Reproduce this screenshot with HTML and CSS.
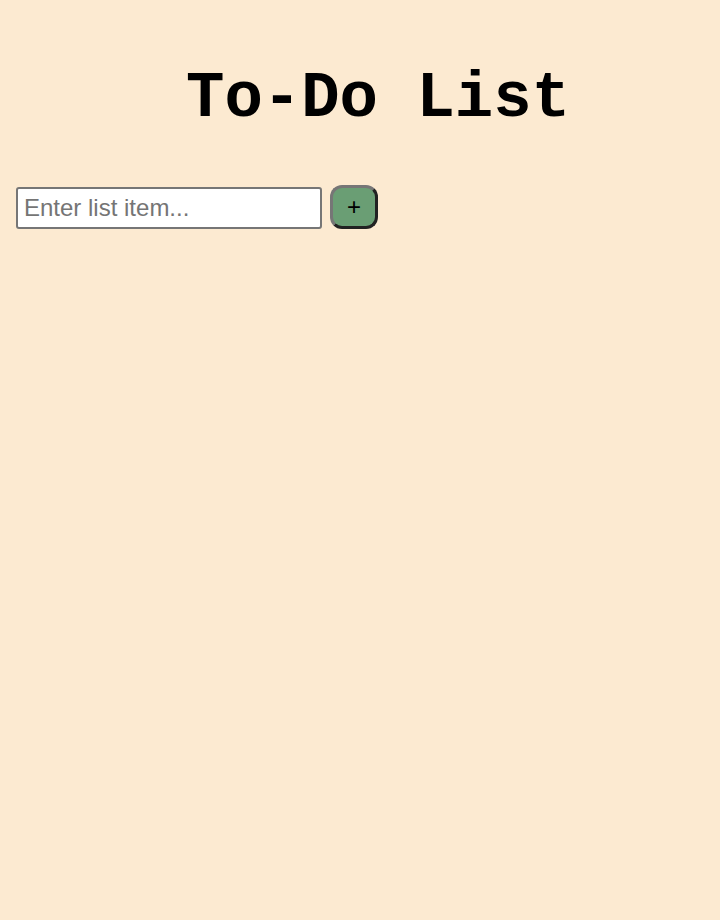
FILE: index.html
```html
<!DOCTYPE html>
<html>
<head>
<meta charset="utf-8">
<link rel="stylesheet" href="styles.css">
</head>
<body>
<h1 class="title">To-Do List</h1>
<div class="entry">
  <input class="item-input" type="text" placeholder="Enter list item...">
  <button class="add-btn">+</button>
</div>
</body>
</html>
```
FILE: styles.css
```css
html, body {
  margin: 0;
  padding: 0;
  background: #fcead1;
  height: 100%;
}
body {
  padding: 16px;
  box-sizing: border-box;
  font-family: "Liberation Sans", Arial, sans-serif;
}
.title {
  font-family: "Liberation Mono", "Courier New", monospace;
  font-weight: bold;
  font-size: 64px;
  text-align: center;
  margin: 51px 0 54px 36px;
  line-height: 1;
}
.entry {
  display: flex;
  align-items: flex-end;
  gap: 8px;
}
.item-input {
  width: 306px;
  height: 42px;
  box-sizing: border-box;
  border: 2px solid #767676;
  border-radius: 3px;
  background: #fff;
  font-family: "Liberation Sans", Arial, sans-serif;
  font-size: 24px;
  padding: 0 6px;
}
.item-input::placeholder {
  color: #757575;
}
.add-btn {
  width: 48px;
  height: 44px;
  box-sizing: border-box;
  border: 3px solid;
  border-color: #767676 #222 #222 #767676;
  border-radius: 12px;
  background: #6a9e74;
  font-family: "Liberation Sans", Arial, sans-serif;
  font-size: 24px;
  color: #000;
  padding: 0;
  line-height: 1;
}
```
